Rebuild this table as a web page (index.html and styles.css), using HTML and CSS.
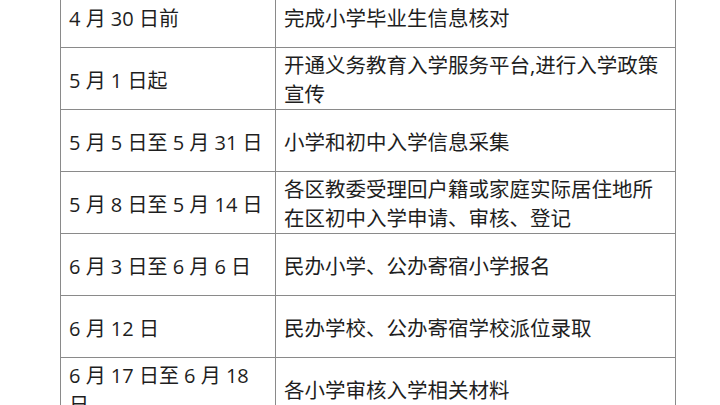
FILE: index.html
```html
<!DOCTYPE html>
<html lang="zh-CN">
<head>
<meta charset="utf-8">
<title>入学时间安排</title>
<link rel="stylesheet" href="styles.css">
</head>
<body>
<table class="schedule">
  <colgroup><col class="col-date"><col class="col-task"></colgroup>
  <tbody>
    <tr><td class="date">4 月 30 日前</td><td class="task">完成小学毕业生信息核对</td></tr>
    <tr><td class="date">5 月 1 日起</td><td class="task">开通义务教育入学服务平台,进行入学政策宣传</td></tr>
    <tr><td class="date">5 月 5 日至 5 月 31 日</td><td class="task">小学和初中入学信息采集</td></tr>
    <tr><td class="date">5 月 8 日至 5 月 14 日</td><td class="task">各区教委受理回户籍或家庭实际居住地所在区初中入学申请、审核、登记</td></tr>
    <tr><td class="date">6 月 3 日至 6 月 6 日</td><td class="task">民办小学、公办寄宿小学报名</td></tr>
    <tr><td class="date">6 月 12 日</td><td class="task">民办学校、公办寄宿学校派位录取</td></tr>
    <tr><td class="date">6 月 17 日至 6 月 18 日</td><td class="task">各小学审核入学相关材料</td></tr>
  </tbody>
</table>
</body>
</html>
```
FILE: styles.css
```css
html, body {
  margin: 0;
  padding: 0;
  background: #ffffff;
  overflow: hidden;
}
.schedule {
  border-collapse: collapse;
  margin: -15px 0 0 60px;
  width: 615px;
  table-layout: fixed;
  font-family: "Open Sans", "Noto Sans CJK SC", sans-serif;
  font-size: 20px;
  line-height: 29px;
  color: #1e1e1e;
}
.col-date { width: 215px; }
.col-task { width: 400px; }
.schedule tr {
  height: 62px;
}
.schedule td {
  border: 1px solid #8a8a8a;
  padding: 3px 8px 0 8px;
  vertical-align: middle;
}
.schedule .task {
  font-size: 20.5px;
}
```
